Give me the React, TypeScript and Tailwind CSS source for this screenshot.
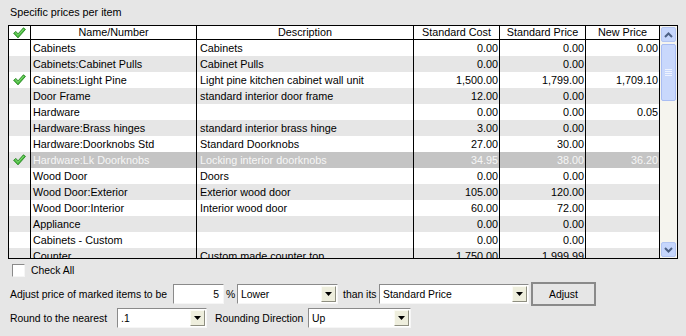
import React from "react";

type Row = {
  name: string;
  desc: string;
  cost: string;
  price: string;
  np: string;
  checked?: boolean;
  selected?: boolean;
};

const rows: Row[] = [
  { name: "Cabinets", desc: "Cabinets", cost: "0.00", price: "0.00", np: "0.00" },
  { name: "Cabinets:Cabinet Pulls", desc: "Cabinet Pulls", cost: "0.00", price: "0.00", np: "" },
  { name: "Cabinets:Light Pine", desc: "Light pine kitchen cabinet wall unit", cost: "1,500.00", price: "1,799.00", np: "1,709.10", checked: true },
  { name: "Door Frame", desc: "standard interior door frame", cost: "12.00", price: "0.00", np: "" },
  { name: "Hardware", desc: "", cost: "0.00", price: "0.00", np: "0.05" },
  { name: "Hardware:Brass hinges", desc: "standard interior brass hinge", cost: "3.00", price: "0.00", np: "" },
  { name: "Hardware:Doorknobs Std", desc: "Standard Doorknobs", cost: "27.00", price: "30.00", np: "" },
  { name: "Hardware:Lk Doorknobs", desc: "Locking interior doorknobs", cost: "34.95", price: "38.00", np: "36.20", checked: true, selected: true },
  { name: "Wood Door", desc: "Doors", cost: "0.00", price: "0.00", np: "" },
  { name: "Wood Door:Exterior", desc: "Exterior wood door", cost: "105.00", price: "120.00", np: "" },
  { name: "Wood Door:Interior", desc: "Interior wood door", cost: "60.00", price: "72.00", np: "" },
  { name: "Appliance", desc: "", cost: "0.00", price: "0.00", np: "" },
  { name: "Cabinets - Custom", desc: "", cost: "0.00", price: "0.00", np: "" },
  { name: "Counter", desc: "Custom made counter top", cost: "1,750.00", price: "1,999.99", np: "" },
];

function Check() {
  return (
    <svg width="13" height="12" viewBox="0 0 13 12">
      <path
        d="M0.6 6.3 L2.9 4.4 L5 6.9 L10.4 0.8 L12.5 2.4 L5 10.9 Z"
        fill="#48bb3e"
        stroke="#23801f"
        strokeWidth="0.8"
        strokeLinejoin="round"
      />
      <path d="M2.2 5.6 L5 8.4 L10.8 2" fill="none" stroke="#8fe07f" strokeWidth="0.8" />
    </svg>
  );
}

function ScrollBtn({ down }: { down?: boolean }) {
  return (
    <div className="w-[15px] h-[15px] mx-[1px] rounded-[2px] border border-[#b3c5f2] bg-[#c6d6fc] flex items-center justify-center">
      <svg width="9" height="6" viewBox="0 0 9 6">
        <path
          d={down ? "M1 1 L4.5 4.5 L8 1" : "M1 5 L4.5 1.5 L8 5"}
          fill="none"
          stroke="#4d6185"
          strokeWidth="2"
        />
      </svg>
    </div>
  );
}

function DropBtn() {
  return (
    <div className="w-[15px] h-[16px] bg-[#eeeedd] border border-t-[#fbfbf4] border-l-[#fbfbf4] border-r-[#8e8e80] border-b-[#8e8e80] flex items-center justify-center">
      <svg width="7" height="4" viewBox="0 0 7 4">
        <path d="M0 0 L7 0 L3.5 4 Z" fill="#000" />
      </svg>
    </div>
  );
}

function Select({ value, w }: { value: string; w: string }) {
  return (
    <div
      className={`${w} h-[20px] bg-white border border-t-[#8a8a8a] border-l-[#8a8a8a] border-r-[#f6f6f6] border-b-[#f6f6f6] flex items-center justify-between pl-[3px] pr-[1px]`}
    >
      <span>{value}</span>
      <DropBtn />
    </div>
  );
}

export default function App() {
  const cols = "grid grid-cols-[22px_166px_217px_86px_86px_74px]";
  return (
    <div className="w-[686px] h-[336px] bg-[#e6e6e6] text-black font-['Liberation_Sans',Arial,sans-serif] text-[10.8px] leading-[13px] overflow-hidden">
      <div className="h-[25px] pl-[10px] pt-[6px]">Specific prices per item</div>

      <div className="ml-[8px] w-[670px] h-[234px] border border-black flex overflow-hidden">
        <div className="w-[651px] flex flex-col">
          <div className={`${cols} h-[15px] border-b border-black bg-white`}>
            <div className="border-r border-black flex items-center justify-center">
              <Check />
            </div>
            <div className="border-r border-black flex items-center justify-center">Name/Number</div>
            <div className="border-r border-black flex items-center justify-center">Description</div>
            <div className="border-r border-black flex items-center justify-center">Standard Cost</div>
            <div className="border-r border-black flex items-center justify-center">Standard Price</div>
            <div className="border-r border-black flex items-center justify-center">New Price</div>
          </div>
          {rows.map((r, i) => {
            const base = i % 2 === 0 ? "bg-white" : "bg-[#e6e6e6]";
            const cell = r.selected ? "bg-[#c4c4c4] text-[#f6f6f6]" : base;
            return (
              <div key={i} className={`${cols} h-[16px] shrink-0 leading-[16px]`}>
                <div className={`${base} border-r border-black flex items-center justify-center`}>
                  {r.checked ? <Check /> : null}
                </div>
                <div className={`${cell} border-r border-black pl-[2px] whitespace-nowrap overflow-hidden`}>{r.name}</div>
                <div className={`${cell} border-r border-black pl-[3px] whitespace-nowrap overflow-hidden`}>{r.desc}</div>
                <div className={`${cell} border-r border-black pr-[1px] text-right`}>{r.cost}</div>
                <div className={`${cell} border-r border-black pr-[1px] text-right`}>{r.price}</div>
                <div className={`${cell} border-r border-black pr-[1px] text-right`}>{r.np}</div>
              </div>
            );
          })}
        </div>
        <div className="w-[17px] bg-[#f5f4ee] flex flex-col pt-[1px] pb-[1px]">
          <ScrollBtn />
          <div className="mt-[2px] mx-[1px] h-[57px] rounded-[2px] border border-[#a9bdf3] bg-[#c9d8fc] flex flex-col items-center justify-center gap-[1px]">
            <div className="w-[7px] h-[1px] bg-[#eef3ff]" />
            <div className="w-[7px] h-[1px] bg-[#eef3ff]" />
            <div className="w-[7px] h-[1px] bg-[#eef3ff]" />
            <div className="w-[7px] h-[1px] bg-[#eef3ff]" />
          </div>
          <div className="flex-1" />
          <ScrollBtn down />
        </div>
      </div>

      <div className="text-[10.4px]">
        <div className="mt-[5px] h-[13px] pl-[12px] flex items-center">
          <div className="w-[13px] h-[13px] bg-white border border-t-[#8a8a8a] border-l-[#8a8a8a] border-r-[#f6f6f6] border-b-[#f6f6f6]" />
          <span className="ml-[6px]">Check All</span>
        </div>

        <div className="mt-[5px] h-[24px] pl-[10px] flex items-center">
          <div className="w-[163px] whitespace-nowrap">Adjust price of marked items to be</div>
          <div className="w-[51px] h-[20px] bg-white border border-t-[#8a8a8a] border-l-[#8a8a8a] border-r-[#f6f6f6] border-b-[#f6f6f6] flex items-center justify-end pr-[4px]">
            5
          </div>
          <div className="w-[13px] pl-[2px]">%</div>
          <Select value="Lower" w="w-[101px]" />
          <div className="w-[41px] pl-[5px] whitespace-nowrap">than its</div>
          <Select value="Standard Price" w="w-[150px]" />
          <div className="ml-[2px] w-[65px] h-[24px] border-2 border-[#8a8a8a] bg-[#e6e6e6] flex items-center justify-center">
            Adjust
          </div>
        </div>

        <div className="mt-[2px] h-[20px] pl-[10px] flex items-center">
          <div className="w-[107px] whitespace-nowrap">Round to the nearest</div>
          <Select value=".1" w="w-[90px]" />
          <div className="w-[101px] pl-[8px] whitespace-nowrap">Rounding Direction</div>
          <Select value="Up" w="w-[103px]" />
        </div>
      </div>
    </div>
  );
}
